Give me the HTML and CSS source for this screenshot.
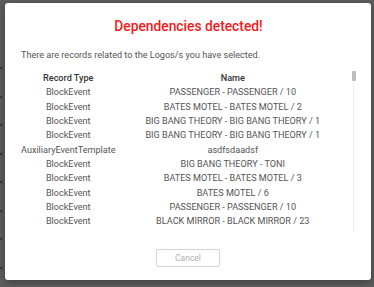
FILE: index.html
```html
<!DOCTYPE html>
<html lang="en">
  <head>
    <meta charset="UTF-8" />
    <meta name="viewport" content="width=device-width, initial-scale=1.0" />
    <title>Dependencies detected</title>
    <link rel="stylesheet" href="styles.css">
  </head>
  <body>
    <div class="backdrop">
      <svg class="mark" viewBox="0 0 4 4"><path d="M0 0L4 4M4 0L0 4" /></svg>
      <svg class="mark" viewBox="0 0 4 4"><path d="M0 0L4 4M4 0L0 4" /></svg>
      <svg class="mark" viewBox="0 0 4 4"><path d="M0 0L4 4M4 0L0 4" /></svg>
      <svg class="mark" viewBox="0 0 4 4"><path d="M0 0L4 4M4 0L0 4" /></svg>
      <svg class="mark" viewBox="0 0 4 4"><path d="M0 0L4 4M4 0L0 4" /></svg>
      <svg class="mark" viewBox="0 0 4 4"><path d="M0 0L4 4M4 0L0 4" /></svg>
      <svg class="mark" viewBox="0 0 4 4"><path d="M0 0L4 4M4 0L0 4" /></svg>
      <svg class="mark" viewBox="0 0 4 4"><path d="M0 0L4 4M4 0L0 4" /></svg>
    </div>

    <div class="modal">
      <h1 class="title">Dependencies detected!</h1>
      <p class="intro">There are records related to the Logos/s you have selected.</p>

      <div class="list">
        <div class="list-body">
          <table class="records">
            <thead>
              <tr>
                <th class="col-type">Record Type</th>
                <th>Name</th>
              </tr>
            </thead>
            <tbody>
              <tr><td>BlockEvent</td><td>PASSENGER - PASSENGER / 10</td></tr>
              <tr><td>BlockEvent</td><td>BATES MOTEL - BATES MOTEL / 2</td></tr>
              <tr><td>BlockEvent</td><td>BIG BANG THEORY - BIG BANG THEORY / 1</td></tr>
              <tr><td>BlockEvent</td><td>BIG BANG THEORY - BIG BANG THEORY / 1</td></tr>
              <tr><td>AuxiliaryEventTemplate</td><td>asdfsdaadsf</td></tr>
              <tr><td>BlockEvent</td><td>BIG BANG THEORY - TONI</td></tr>
              <tr><td>BlockEvent</td><td>BATES MOTEL - BATES MOTEL / 3</td></tr>
              <tr><td>BlockEvent</td><td>BATES MOTEL / 6</td></tr>
              <tr><td>BlockEvent</td><td>PASSENGER - PASSENGER / 10</td></tr>
              <tr><td>BlockEvent</td><td>BLACK MIRROR - BLACK MIRROR / 23</td></tr>
            </tbody>
          </table>
        </div>
        <div class="scrollbar"><div class="thumb"></div></div>
      </div>

      <div class="actions">
        <button class="cancel" disabled>Cancel</button>
      </div>
    </div>
  </body>
</html>
```

FILE: styles.css
```css
body {
  margin: 0;
  width: 374px;
  height: 287px;
  overflow: hidden;
  background-color: #5e5e5e;
  font-family: Roboto, "Liberation Sans", sans-serif;
  position: relative;
}

/* dimmed page behind the dialog */
.backdrop {
  position: absolute;
  left: -1px;
  top: 66px;
  display: flex;
  flex-direction: column;
  gap: 24.5px;
}

.mark {
  width: 4px;
  height: 4px;
  stroke: #3a3a3a;
  stroke-width: 1;
}

.modal {
  position: absolute;
  left: 5px;
  top: 3px;
  width: 366px;
  height: 277px;
  box-sizing: border-box;
  padding: 15px 15px 0 16px;
  background-color: #ffffff;
  border-radius: 3px;
  box-shadow: 0 2px 8px rgba(0, 0, 0, 0.35);
  display: flex;
  flex-direction: column;
}

.title {
  margin: 0;
  text-align: center;
  color: #f51a1a;
  font-size: 13.8px;
  font-weight: 500;
  line-height: 17px;
}

.intro {
  margin: 14px 0 0;
  font-size: 9.1px;
  line-height: 12px;
  color: #555;
}

.list {
  margin-top: 10px;
  height: 161px;
  display: flex;
}

.list-body {
  flex: 1;
  overflow: hidden;
}

.records {
  width: 100%;
  border-collapse: collapse;
  font-size: 9.1px;
  color: #555;
}

.records th,
.records td {
  padding: 0;
  height: 14.3px;
  text-align: center;
  white-space: nowrap;
}

.records th {
  color: #333;
  font-weight: 500;
}

.col-type {
  width: 94px;
}

.scrollbar {
  width: 4px;
  margin-left: 2px;
  background: linear-gradient(to right, transparent 1px, #efefef 1px, #efefef 2px, transparent 2px);
}

.thumb {
  height: 10px;
  background-color: #bdbdbd;
  border-radius: 1px;
}

.actions {
  display: flex;
  justify-content: center;
  margin-top: 17px;
  margin-left: -1px;
}

.cancel {
  display: flex;
  align-items: center;
  justify-content: center;
  width: 64px;
  height: 18px;
  padding: 0;
  border: 1px solid #d4d4d4;
  border-radius: 2px;
  background-color: #fff;
  color: #b0b0b0;
  font-family: Roboto, "Liberation Sans", sans-serif;
  font-size: 8.5px;
}
```
